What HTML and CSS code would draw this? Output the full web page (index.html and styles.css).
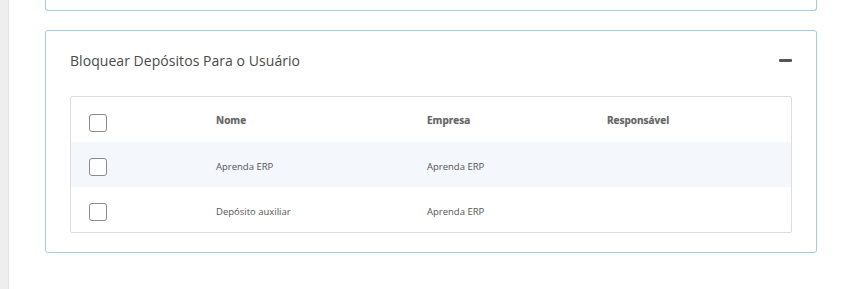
FILE: index.html
```html
<!DOCTYPE html>
<html lang="pt-BR">
<head>
<meta charset="utf-8">
<link rel="stylesheet" href="styles.css">
</head>
<body>
<div class="layout">
  <aside class="rail"></aside>
  <main class="content">
    <section class="card card-prev"></section>
    <section class="card panel">
      <header class="panel-head">
        <h2 class="panel-title">Bloquear Depósitos Para o Usuário</h2>
        <span class="collapse" aria-label="Recolher"></span>
      </header>
      <div class="table">
        <div class="row head">
          <div class="cell"><span class="check"></span></div>
          <div class="cell">Nome</div>
          <div class="cell">Empresa</div>
          <div class="cell">Responsável</div>
        </div>
        <div class="row alt">
          <div class="cell"><span class="check"></span></div>
          <div class="cell">Aprenda ERP</div>
          <div class="cell">Aprenda ERP</div>
          <div class="cell"></div>
        </div>
        <div class="row">
          <div class="cell"><span class="check"></span></div>
          <div class="cell">Depósito auxiliar</div>
          <div class="cell">Aprenda ERP</div>
          <div class="cell"></div>
        </div>
      </div>
    </section>
  </main>
</div>
</body>
</html>
```
FILE: styles.css
```css
* { box-sizing: border-box; }
html, body { margin: 0; padding: 0; background: #fff; }
body {
  font-family: "Open Sans", "Noto Sans", sans-serif;
  color: #555;
}
.layout {
  display: flex;
  height: 289px;
  overflow: hidden;
}
.rail {
  width: 9px;
  flex: none;
  background: #eeeeee;
  border-right: 1px solid #e2e2e2;
}
.content {
  flex: 1;
  padding: 0 36px 0 36px;
  display: flex;
  flex-direction: column;
  gap: 19px;
}
.card {
  border: 1px solid #9fcfdc;
  border-radius: 3px;
  background: #fff;
}
.card-prev {
  height: 12px;
  margin-top: -1px;
  border-top: none;
  border-radius: 0 0 3px 3px;
  flex: none;
}
.panel {
  padding: 0 24px 19px 24px;
}
.panel-head {
  display: flex;
  align-items: center;
  justify-content: space-between;
  height: 65px;
  padding-bottom: 6px;
}
.panel-title {
  margin: 0;
  font-size: 14px;
  font-weight: 400;
  color: #4a4a4a;
  letter-spacing: 0.05px;
}
.collapse {
  width: 13px;
  height: 3px;
  border-radius: 1px;
  background: #555;
  margin-top: -1px;
}
.table {
  border: 1px solid #dddddd;
  border-radius: 2px;
}
.row {
  display: grid;
  grid-template-columns: 145px 211px 180px 1fr;
  align-items: center;
  height: 45px;
  font-size: 9.5px;
  color: #555;
}
.row.head {
  font-weight: 700;
  color: #666;
  font-size: 10px;
  text-shadow: 0 0 1px rgba(0,0,0,0.25);
}
.row.alt { background: #f4f7fb; }
.cell { padding: 0; }
.row:not(.head) .cell { margin-top: 3px; }
.cell:first-child { padding-left: 18px; }
.row:not(.head) .cell:first-child { margin-top: 5px; }
.row.head .cell:first-child { margin-top: 7px; }
.check {
  display: block;
  width: 18px;
  height: 18px;
  border: 1px solid #8a8a8a;
  border-radius: 3px;
  background: #fff;
}
```
